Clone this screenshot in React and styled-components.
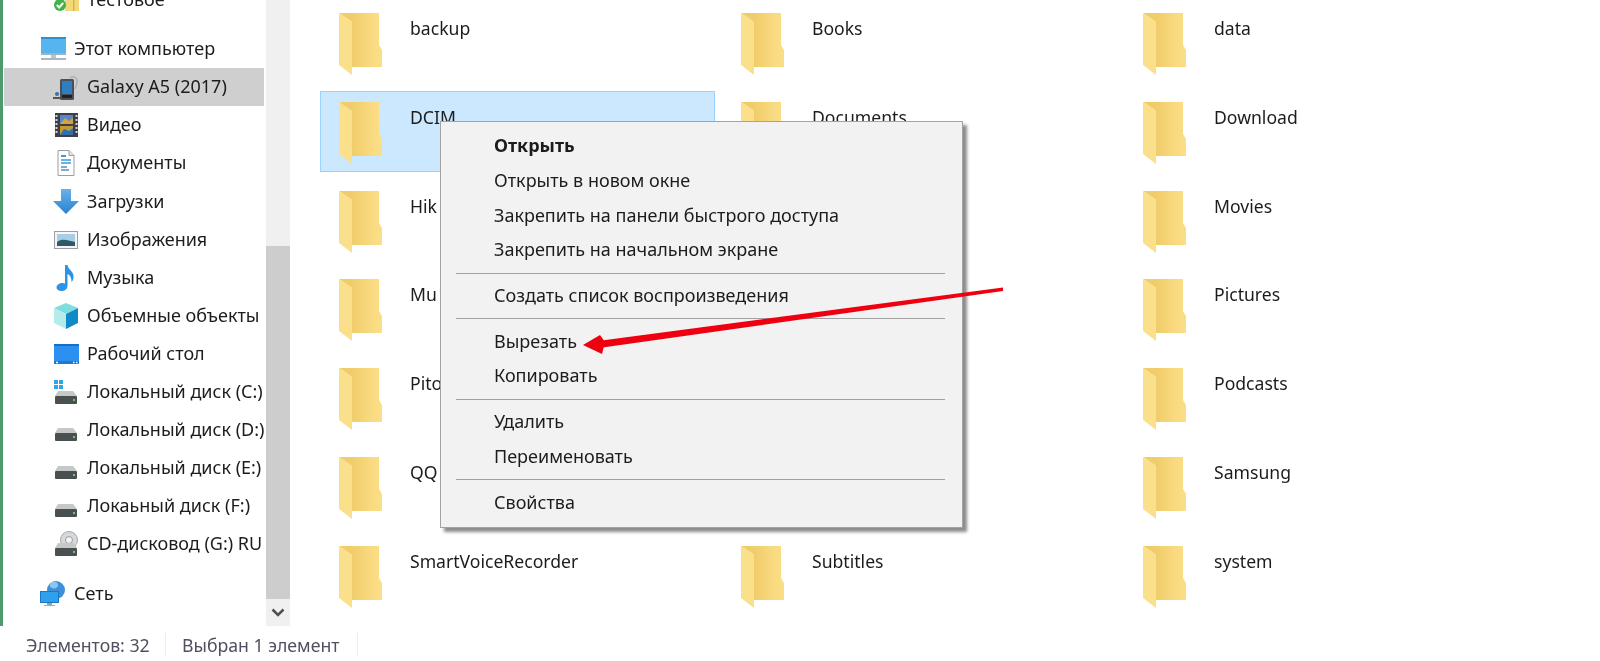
import React from 'react';
import styled, { createGlobalStyle } from 'styled-components';

const GlobalStyle = createGlobalStyle`
  html, body {
    margin: 0;
    padding: 0;
    background: #fff;
  }
`;

const Window = styled.div`
  position: relative;
  width: 1600px;
  height: 661px;
  overflow: hidden;
  display: flex;
  flex-direction: column;
  background: #fff;
  color: #1c1c1c;
  font-family: "Noto Sans", "Open Sans", sans-serif;
  font-size: 18px;
  filter: blur(0.35px);
`;

const Body = styled.div`
  flex: 1;
  min-height: 0;
  display: flex;
`;

const Sidebar = styled.aside`
  width: 287px;
  flex: none;
  display: flex;
  border-left: 3px solid #4d9a6c;
  overflow: hidden;
`;

const NavList = styled.nav`
  width: 263px;
  flex: none;
  margin-top: -19px;
  padding-left: 1px;
  box-sizing: border-box;
`;

const NavRow = styled.div`
  width: 260px;
  height: 38.1px;
  margin-top: ${p => p.$gap || 0}px;
  padding: 0 0 2px ${p => (p.$level ? 49 : 36)}px;
  box-sizing: border-box;
  display: flex;
  align-items: center;
  gap: 8px;
  overflow: hidden;
  white-space: nowrap;
  background: ${p => (p.$active ? '#cfcfcf' : 'transparent')};

  svg {
    flex: none;
    margin-top: 2px;
  }
`;

const Scrollbar = styled.div`
  width: 24px;
  flex: none;
  display: flex;
  flex-direction: column;
  background: #f0f0f0;
`;

const ScrollSpace = styled.div`
  height: 246px;
`;

const ScrollThumb = styled.div`
  flex: 1;
  background: #cdcdcd;
`;

const ScrollButton = styled.div`
  height: 27px;
  display: flex;
  align-items: center;
  justify-content: center;
`;

const FolderGrid = styled.main`
  flex: 1;
  display: grid;
  grid-template-columns: repeat(3, 395px);
  grid-auto-rows: 81px;
  column-gap: 7px;
  row-gap: 7.8px;
  padding: 2px 0 0 30px;
  align-content: start;
`;

const FolderItem = styled.div`
  display: flex;
  align-items: flex-start;
  padding: 10px 0 0 18px;
  box-sizing: border-box;
  border: 1px solid ${p => (p.$selected ? '#99d1ff' : 'transparent')};
  background: ${p => (p.$selected ? '#cce8ff' : 'transparent')};
`;

const FolderName = styled.span`
  margin: 3px 0 0 28px;
  line-height: 24px;
  font-size: 17.6px;
`;

const StatusBar = styled.footer`
  height: 35px;
  flex: none;
  display: flex;
  align-items: center;
  padding: 2px 0 0 26px;
  box-sizing: border-box;
  color: #505060;
  font-size: 17.7px;
`;

const StatusCell = styled.span`
  width: ${p => p.$width}px;
  height: 24px;
  line-height: 24px;
  box-sizing: border-box;
  border-right: 1px solid #eeeeee;
  margin-right: 16px;
  white-space: nowrap;
`;

const ContextMenu = styled.div`
  position: absolute;
  left: 440px;
  top: 121px;
  width: 523px;
  padding: 7px 2px;
  box-sizing: border-box;
  background: #f2f2f2;
  border: 1px solid #a3a3a3;
  box-shadow: 4px 4px 3px rgba(0, 0, 0, 0.45);
`;

const MenuItem = styled.div`
  height: 34.7px;
  display: flex;
  align-items: center;
  padding: 0 0 2px 51px;
  box-sizing: border-box;
  font-weight: ${p => (p.$bold ? 700 : 400)};
`;

const MenuSeparator = styled.div`
  height: 1px;
  margin: 5px 15px 5px 13px;
  background: #a0a0a0;
`;

const ArrowOverlay = styled.svg`
  position: absolute;
  left: 570px;
  top: 280px;
  pointer-events: none;
`;

const Screen = ({ children }) => (
  <svg width="26" height="26" viewBox="0 0 26 26">{children}</svg>
);

const Drive = ({ y = 13 }) => (
  <g transform={`translate(0 ${y})`}>
    <path d="M5 0h15l4 5H2z" fill="#c4c8c8" />
    <rect x="2" y="5" width="22" height="8" rx="1" fill="#4a4f4f" />
    <rect x="20" y="8" width="2" height="2" fill="#5fd35f" />
  </g>
);

const icons = {
  tested: (
    <Screen>
      <rect x="12" y="12" width="14" height="12" fill="#f4d77a" />
      <rect x="20" y="12" width="1.5" height="12" fill="#d9b24f" />
      <circle cx="7" cy="18" r="6" fill="#3fb34a" />
      <path d="M3.8 18l2.4 2.5 4-4.5" fill="none" stroke="#fff" strokeWidth="2" />
    </Screen>
  ),
  computer: (
    <Screen>
      <rect x="1" y="1" width="25" height="16" fill="#56b4ee" />
      <rect x="1" y="1" width="25" height="2" fill="#2f8fd0" />
      <path d="M1 17h25v2H1z" fill="#9ab4c4" />
      <path d="M11 19h5v3h-5z" fill="#b8c8d0" />
      <rect x="1" y="22" width="25" height="2" fill="#a8b8c2" />
    </Screen>
  ),
  phone: (
    <Screen>
      <path d="M17 4c4-3 8 0 7 5l-2 6" fill="none" stroke="#aab0b4" strokeWidth="1.4" />
      <rect x="7" y="5" width="14" height="21" rx="1.5" fill="#4a5058" />
      <rect x="9" y="7" width="10" height="13" fill="#2f7fc0" />
      <rect x="9" y="21" width="10" height="3" fill="#222" />
      <path d="M0 23h7v2H0z" fill="#555" />
      <circle cx="4" cy="20" r="2" fill="#3a6ea5" />
    </Screen>
  ),
  video: (
    <Screen>
      <rect x="2" y="1" width="23" height="24" fill="#3e3e46" />
      <path d="M3.5 3v20M23.5 3v20" stroke="#cfd2d6" strokeWidth="2" strokeDasharray="2 2" />
      <rect x="7" y="3" width="13" height="9" fill="#5a86c8" />
      <path d="M7 12l5-6 4 3 4-3v6z" fill="#d2a53c" />
      <rect x="7" y="14" width="13" height="9" fill="#c49a30" />
      <path d="M7 23l4-6 5 2 4-3v7z" fill="#2f6fb2" />
    </Screen>
  ),
  docs: (
    <Screen>
      <path d="M5 0.5h11l5 5v20H5z" fill="#fff" stroke="#9a9ea4" />
      <path d="M16 .5v5h5" fill="#dfe3e6" stroke="#9a9ea4" />
      <path d="M8 6h5" stroke="#3a9ad9" strokeWidth="2" />
      <path d="M8 10h10M8 13h10" stroke="#3a9ad9" strokeWidth="1.5" />
      <path d="M8 17h6M8 20h8" stroke="#5f8fb0" strokeWidth="1.5" />
    </Screen>
  ),
  downloads: (
    <Screen>
      <defs>
        <linearGradient id="dl" x1="0" y1="0" x2="0" y2="1">
          <stop offset="0" stopColor="#6ab2ea" />
          <stop offset="1" stopColor="#2a80d2" />
        </linearGradient>
      </defs>
      <path d="M8 0h10v12h8L13 25 0 12h8z" fill="url(#dl)" />
    </Screen>
  ),
  images: (
    <Screen>
      <rect x="1.5" y="4.5" width="23" height="17" fill="#f4f6f7" stroke="#9a9ea2" />
      <rect x="4" y="7" width="18" height="12" fill="#a8cde6" />
      <path d="M4 15c5-4 10-2 18 0v4H4z" fill="#2f5a68" />
    </Screen>
  ),
  music: (
    <Screen>
      <path d="M12 0h2.500c.5 5 7 6 6 13-.3 2-1 3-2 4 .2-4-1.500-7-4-8v12c0 3-3 5-6 5-3 0-5-1.500-5-3.500 0-2.500 3-4.500 6-4.500 1 0 1.800.2 2.500.5z" fill="#2d93e6" />
    </Screen>
  ),
  objects: (
    <Screen>
      <path d="M13 0l12 5-12 6L1 5z" fill="#7fdde0" />
      <path d="M1 5l12 6v15L1 20z" fill="#b4ecec" />
      <path d="M25 5l-12 6v15l12-6z" fill="#1089c6" />
    </Screen>
  ),
  desktop: (
    <Screen>
      <rect x="1" y="3" width="25" height="20" rx="1" fill="#2b90f0" />
      <rect x="1" y="3" width="25" height="2" fill="#1670c8" />
      <rect x="1" y="20" width="25" height="3" fill="#1a7ad0" />
      <path d="M3 21.500h2M20 21.500h1.500M23 21.500h1.500" stroke="#fff" strokeWidth="1.500" />
    </Screen>
  ),
  systemDisk: (
    <Screen>
      <path d="M1 1h4v4H1zM6 1h4v4H6zM1 6h4v4H1zM6 6h4v4H6z" fill="#2ea7ea" />
      <Drive y={12} />
    </Screen>
  ),
  disk: (
    <Screen>
      <Drive y={11} />
    </Screen>
  ),
  cd: (
    <Screen>
      <circle cx="16" cy="9" r="8.500" fill="#d6d8da" stroke="#a6a8aa" />
      <circle cx="16" cy="9" r="3.500" fill="#f2f3f4" stroke="#9a9c9e" />
      <Drive y={12} />
    </Screen>
  ),
  network: (
    <Screen>
      <circle cx="16" cy="9" r="9" fill="#3f8fd8" />
      <path d="M12 1c-3 2-3 5 0 6s6 0 6-3-3-4-6-3z" fill="#8cc6ee" />
      <rect x="0.500" y="10.500" width="18" height="11" fill="#2f9fee" stroke="#1a78c0" />
      <path d="M7 22h5v2H7z" fill="#8aa4b4" />
      <path d="M4 24.500h11" stroke="#9ab4c4" strokeWidth="1.200" />
    </Screen>
  ),
};

const navRows = [
  { label: 'Тестовое', icon: 'tested', level: 1 },
  { label: 'Этот компьютер', icon: 'computer', gap: 11 },
  { label: 'Galaxy A5 (2017)', icon: 'phone', level: 1, active: true },
  { label: 'Видео', icon: 'video', level: 1 },
  { label: 'Документы', icon: 'docs', level: 1 },
  { label: 'Загрузки', icon: 'downloads', level: 1 },
  { label: 'Изображения', icon: 'images', level: 1 },
  { label: 'Музыка', icon: 'music', level: 1 },
  { label: 'Объемные объекты', icon: 'objects', level: 1 },
  { label: 'Рабочий стол', icon: 'desktop', level: 1 },
  { label: 'Локальный диск (C:)', icon: 'systemDisk', level: 1 },
  { label: 'Локальный диск (D:)', icon: 'disk', level: 1 },
  { label: 'Локальный диск (E:)', icon: 'disk', level: 1 },
  { label: 'Локаьный диск (F:)', icon: 'disk', level: 1 },
  { label: 'CD-дисковод (G:) RU', icon: 'cd', level: 1 },
  { label: 'Сеть', icon: 'network', gap: 12 },
];

// Names under the context menu are left as far as they can be read
const folders = [
  'backup', 'Books', 'data',
  'DCIM', 'Documents', 'Download',
  'Hik', '', 'Movies',
  'Mu', '', 'Pictures',
  'Pito', '', 'Podcasts',
  'QQ', '', 'Samsung',
  'SmartVoiceRecorder', 'Subtitles', 'system',
];

const menuGroups = [
  ['Открыть', 'Открыть в новом окне', 'Закрепить на панели быстрого доступа', 'Закрепить на начальном экране'],
  ['Создать список воспроизведения'],
  ['Вырезать', 'Копировать'],
  ['Удалить', 'Переименовать'],
  ['Свойства'],
];

const FolderIcon = () => (
  <svg width="43" height="62" viewBox="0 0 43 62">
    <defs>
      <linearGradient id="folderBack" x1="0" y1="0" x2="1" y2="0">
        <stop offset="0.3" stopColor="#f0cc6a" />
        <stop offset="0.75" stopColor="#f9da80" />
        <stop offset="1" stopColor="#fbde88" />
      </linearGradient>
    </defs>
    <path d="M0 0H40V32L43 37V54H13V9z" fill="url(#folderBack)" />
    <path d="M0 0L13 9V62L0 52z" fill="#fbe08c" />
  </svg>
);

const App = () => (
  <>
    <GlobalStyle />
    <Window>
      <Body>
        <Sidebar>
          <NavList>
            {navRows.map(row => (
              <NavRow key={row.label} $level={row.level} $active={row.active} $gap={row.gap}>
                {icons[row.icon]}
                {row.label}
              </NavRow>
            ))}
          </NavList>
          <Scrollbar>
            <ScrollSpace />
            <ScrollThumb />
            <ScrollButton>
              <svg width="14" height="9" viewBox="0 0 14 9">
                <path d="M1.500 1.500L7 7l5.500-5.500" fill="none" stroke="#505050" strokeWidth="2.500" />
              </svg>
            </ScrollButton>
          </Scrollbar>
        </Sidebar>
        <FolderGrid>
          {folders.map((name, i) => (
            <FolderItem key={i} $selected={name === 'DCIM'}>
              <FolderIcon />
              <FolderName>{name}</FolderName>
            </FolderItem>
          ))}
        </FolderGrid>
      </Body>
      <StatusBar>
        <StatusCell $width={140}>Элементов: 32</StatusCell>
        <StatusCell $width={176}>Выбран 1 элемент</StatusCell>
      </StatusBar>
      <ContextMenu>
        {menuGroups.map((group, i) => (
          <React.Fragment key={i}>
            {i > 0 && <MenuSeparator />}
            {group.map(label => (
              <MenuItem key={label} $bold={label === 'Открыть'}>{label}</MenuItem>
            ))}
          </React.Fragment>
        ))}
      </ContextMenu>
      <ArrowOverlay width="450" height="90" viewBox="570 280 450 90">
        <path d="M1003 287.500L1003 291L599 348L598 341z" fill="#ee0010" />
        <path d="M583 345L600 335L605 342L602 354z" fill="#ee0010" />
      </ArrowOverlay>
    </Window>
  </>
);

export default App;
